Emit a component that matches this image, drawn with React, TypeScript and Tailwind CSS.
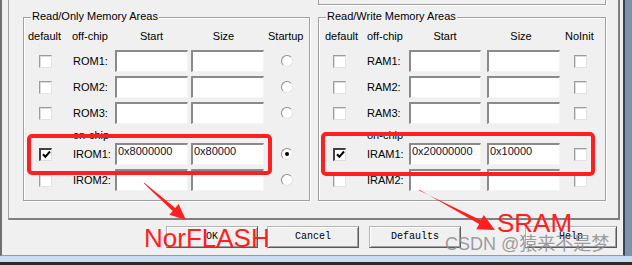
import React from "react";

const Check = ({ checked = false }: { checked?: boolean }) =>
  checked ? (
    <div className="w-[13px] h-[13px] bg-white border-t-2 border-l-2 border-t-[#404040] border-l-[#404040] border-r border-b border-r-[#dcdcdc] border-b-[#dcdcdc] flex items-center justify-center">
      <svg width="9" height="9" viewBox="0 0 9 9">
        <path d="M1 4.2 L3.4 6.8 L8 1.5" fill="none" stroke="#000" strokeWidth="2" />
      </svg>
    </div>
  ) : (
    <div className="w-[13px] h-[13px] bg-white border border-t-[#9c9c9c] border-l-[#9c9c9c] border-r-[#e2e2e2] border-b-[#e2e2e2] shadow-[inset_1px_1px_0_#dcdcdc]" />
  );

const Radio = ({ selected = false }: { selected?: boolean }) => (
  <div className="w-[12px] h-[12px] rounded-full bg-white border border-t-[#8c8c8c] border-l-[#8c8c8c] border-r-[#e4e4e4] border-b-[#e4e4e4] flex items-center justify-center">
    {selected && <div className="w-[4px] h-[4px] rounded-full bg-black" />}
  </div>
);

const Input = ({ value = "", w }: { value?: string; w: string }) => (
  <div
    className={`${w} h-[22px] bg-white border-t-2 border-l-2 border-t-[#8a8a8a] border-l-[#8a8a8a] border-b border-r border-b-[#f4f4f4] border-r-[#f4f4f4] pl-[1px] pt-[0px] text-[11px] leading-[13px] text-[#101030] overflow-hidden`}
  >
    {value}
  </div>
);

type RowProps = { label: string; start?: string; size?: string; checked?: boolean; selected?: boolean };

const LeftRow = ({ label, start, size, checked, selected }: RowProps) => (
  <div className="flex items-center h-[22px]">
    <div className="w-[43px] flex justify-center">
      <Check checked={checked} />
    </div>
    <div className="w-[48px] pl-[6px]">{label}</div>
    <Input w="w-[73px]" value={start} />
    <div className="w-[3px]" />
    <Input w="w-[73px]" value={size} />
    <div className="w-[45px] flex justify-center">
      <Radio selected={selected} />
    </div>
  </div>
);

const RightRow = ({ label, start, size, checked }: RowProps) => (
  <div className="flex items-center h-[22px]">
    <div className="w-[41px] flex justify-center">
      <Check checked={checked} />
    </div>
    <div className="w-[49px] pl-[7px]">{label}</div>
    <Input w="w-[72px]" value={start} />
    <div className="w-[6px]" />
    <Input w="w-[73px]" value={size} />
    <div className="w-[41px] flex justify-center">
      <Check />
    </div>
  </div>
);

const GroupTitle = ({ text }: { text: string }) => (
  <div className="absolute -top-[8px] left-[7px] px-[1px] bg-[#f0f0f0] leading-[13px] whitespace-nowrap">{text}</div>
);

const groupCls =
  "relative border border-[#a0a0a0] shadow-[inset_1px_1px_0_#ffffff,1px_1px_0_#ffffff] pt-[12px] pb-[9px]";

const Btn = ({ children, cls }: { children: React.ReactNode; cls: string }) => (
  <div
    className={`${cls} w-[92px] h-[22px] flex items-center justify-center bg-[#f0f0f0] border border-t-[#b4b4b4] border-l-[#b4b4b4] border-r-[#5a5a5a] border-b-[#5a5a5a] shadow-[inset_1px_1px_0_#ffffff,inset_-1px_-1px_0_#a0a0a0] font-['Liberation_Mono',monospace] text-[10px] leading-[12px] text-black`}
  >
    {children}
  </div>
);

export default function App() {
  return (
    <div className="w-[632px] h-[265px] overflow-hidden relative bg-[#f0f0f0] flex flex-col font-['Liberation_Sans',Arial,sans-serif] text-[11px] leading-[13px] text-black">
      <div className="flex h-[256px] shrink-0">
        <div className="w-[625px] h-[256px] border-l-2 border-l-[#707070] border-r-2 border-r-[#3a4658] border-b border-b-[#9a9a9a] flex flex-col">
          {/* tab panel */}
          <div className="ml-[6px] w-[612px] h-[220px] shrink-0 border-l border-l-[#a0a0a0] border-r-2 border-r-[#808080] border-b-2 border-b-[#808080] flex pl-[14px] pr-[12px] gap-[8px]">
            {/* left column */}
            <div className="w-[287px] flex flex-col">
              <div className={`${groupCls} mt-[17px]`}>
                <GroupTitle text="Read/Only Memory Areas" />
                <div className="flex h-[13px] whitespace-nowrap">
                  <div className="w-[43px] pl-[4px]">default</div>
                  <div className="w-[48px] pl-[5px]">off-chip</div>
                  <div className="w-[73px] text-center">Start</div>
                  <div className="w-[3px]" />
                  <div className="w-[73px] text-center pr-[8px]">Size</div>
                  <div className="w-[45px] pl-[4px]">Startup</div>
                </div>
                <div className="mt-[7px] flex flex-col gap-[4px]">
                  <LeftRow label="ROM1:" />
                  <LeftRow label="ROM2:" />
                  <LeftRow label="ROM3:" />
                </div>
                <div className="h-[19px] pt-[5px] pl-[49px]">on-chip</div>
                <div className="flex flex-col gap-[4px]">
                  <LeftRow label="IROM1:" start="0x8000000" size="0x80000" checked selected />
                  <LeftRow label="IROM2:" />
                </div>
              </div>
            </div>
            {/* right column */}
            <div className="w-[288px] flex flex-col">
              <div className="h-[5px] border-l border-r border-b border-[#a0a0a0] shadow-[1px_1px_0_#ffffff]" />
              <div className={`${groupCls} mt-[12px]`}>
                <GroupTitle text="Read/Write Memory Areas" />
                <div className="flex h-[13px] whitespace-nowrap">
                  <div className="w-[41px] pl-[6px]">default</div>
                  <div className="w-[49px] pl-[7px]">off-chip</div>
                  <div className="w-[72px] text-center">Start</div>
                  <div className="w-[6px]" />
                  <div className="w-[73px] text-center pr-[5px]">Size</div>
                  <div className="w-[45px] pl-[5px]">NoInit</div>
                </div>
                <div className="mt-[7px] flex flex-col gap-[4px]">
                  <RightRow label="RAM1:" />
                  <RightRow label="RAM2:" />
                  <RightRow label="RAM3:" />
                </div>
                <div className="h-[19px] pt-[5px] pl-[48px]">on-chip</div>
                <div className="flex flex-col gap-[4px]">
                  <RightRow label="IRAM1:" start="0x20000000" size="0x10000" checked />
                  <RightRow label="IRAM2:" />
                </div>
              </div>
            </div>
          </div>
          {/* buttons */}
          <div className="flex mt-[6px]">
            <Btn cls="ml-[164px]">OK</Btn>
            <Btn cls="ml-[9px]">Cancel</Btn>
            <Btn cls="ml-[10px]">Defaults</Btn>
            <Btn cls="ml-[64px]">Help</Btn>
          </div>
        </div>
        <div className="w-[7px] bg-[#7d93ad]" />
      </div>
      <div className="h-[6px] shrink-0 bg-[#cadcf1]" />
      <div className="h-[3px] shrink-0 bg-[#2b2b2b]" />

      {/* annotations */}
      <div className="absolute left-[27px] top-[134px] w-[245px] h-[41px] border-[4px] border-[#fe2020] rounded-[5px]" />
      <div className="absolute left-[321px] top-[132px] w-[274px] h-[44px] border-[4px] border-[#fe2020] rounded-[5px]" />
      <svg className="absolute left-0 top-0" width="632" height="265" viewBox="0 0 632 265">
        <polygon
          points="143.7,183.3 172.7,210.9 169.4,214.7 186,220 178.6,204.1 175.3,207.9 144.3,182.7"
          fill="#fe2020"
        />
        <polygon
          points="419,189.6 479.1,223.9 476.3,229.2 495,230 483.7,215 480.9,220.3 419.2,190.4"
          fill="#fe2020"
        />
      </svg>
      <div className="absolute left-[144px] top-[225px] text-[26px] leading-[26px] text-[#fe2020] font-['Liberation_Sans',Arial,sans-serif] whitespace-nowrap">
        NorFLASH
      </div>
      <div className="absolute left-[497px] top-[210px] text-[26px] leading-[26px] text-[#fe2020] font-['Liberation_Sans',Arial,sans-serif] whitespace-nowrap">
        SRAM
      </div>
      <div className="absolute left-[445px] top-[233px] text-[18px] leading-[22px] text-[#8c8c8c]/85 font-['Liberation_Sans','Noto_Sans_CJK_SC',sans-serif] whitespace-nowrap">
        CSDN @猿来不是梦
      </div>
    </div>
  );
}
